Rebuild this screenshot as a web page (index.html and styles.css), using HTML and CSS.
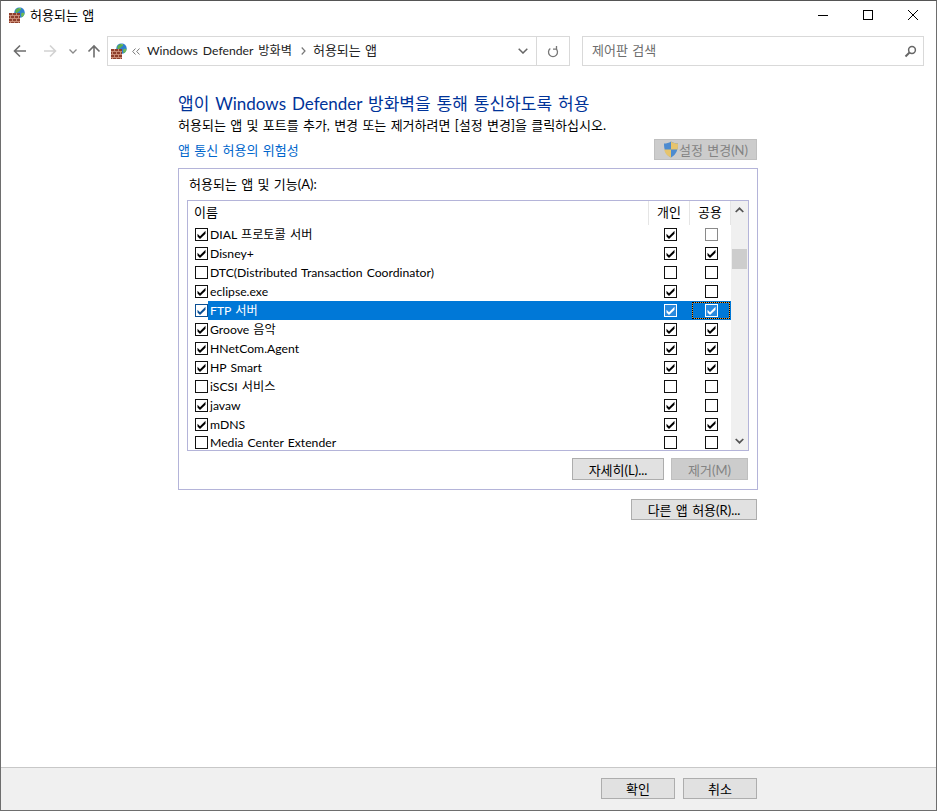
FILE: index.html
```html
<!DOCTYPE html>
<html lang="ko">
<head>
<meta charset="utf-8">
<title>허용되는 앱</title>
<link rel="stylesheet" href="styles.css">
</head>
<body>
<svg class="defs" width="0" height="0">
  <defs>
    <symbol id="fw" viewBox="0 0 16 16">
      <circle cx="10.500" cy="5.500" r="5.200" fill="#2f7fd0"/>
      <path d="M7 2.500c1.500-1.600 3.600-2 5-1.200.8 1-.3 2-1.500 2.400-.6 1.600-1.800 1-2.300 2.300-.9.400-1.800-.2-1.900-1.200 0-.9.200-1.600.7-2.300z" fill="#5fb04a"/>
      <path d="M12.500 6c1.200-.4 2.400-.4 3 .2-.2 2-1.300 3.500-2.700 4-.9-1-.9-2.800-.3-4.200z" fill="#6dbb55"/>
      <path d="M9 .6c1-.3 2.500-.2 3.200.4-.8.500-2.200.500-3.200-.4z" fill="#d7ecfa"/>
      <rect x="0" y="6" width="11" height="10" fill="#8e3f2c"/>
      <path d="M0 8.500h11M0 11.500h11M0 14.500h11M3.500 6v2.500M7.500 6v2.500M1.500 8.500v3M5.500 8.500v3M9.500 8.500v3M3.500 11.500v3M7.500 11.500v3M1.500 14.500V16M5.500 14.500V16M9.500 14.500V16" stroke="#c98a74" stroke-width="1" fill="none"/>
    </symbol>
    <symbol id="on" viewBox="0 0 13 13">
      <rect x=".5" y=".5" width="12" height="12" fill="#fff" stroke="#111"/>
      <path d="M2.500 5.800l2.500 2.400 5.500-5.400v3l-5.500 5.300-2.500-2.500z" fill="#000"/>
    </symbol>
    <symbol id="off" viewBox="0 0 13 13">
      <rect x=".5" y=".5" width="12" height="12" fill="#fff" stroke="#111"/>
    </symbol>
    <symbol id="dim" viewBox="0 0 13 13">
      <rect x=".5" y=".5" width="12" height="12" fill="#fff" stroke="#8a8a8a"/>
    </symbol>
    <symbol id="sel" viewBox="0 0 13 13">
      <rect x=".5" y=".5" width="12" height="12" fill="#fff" stroke="#0a4f94"/>
      <path d="M2.500 5.800l2.500 2.400 5.500-5.400v3l-5.500 5.300-2.500-2.500z" fill="#0a4f94"/>
    </symbol>
    <symbol id="selw" viewBox="0 0 13 13">
      <rect x=".5" y=".5" width="12" height="12" fill="#2a8ade" stroke="#fff"/>
      <path d="M2.500 5.800l2.500 2.400 5.500-5.400v3l-5.500 5.300-2.500-2.500z" fill="#fff"/>
    </symbol>
  </defs>
</svg>

<div class="window">
  <header class="titlebar">
    <div class="title-left">
      <svg class="icon16"><use href="#fw"/></svg>
      <span>허용되는 앱</span>
    </div>
    <div class="caption">
      <span class="cap"><svg width="10" height="10" viewBox="0 0 10 10"><path d="M0 5.500h10" stroke="#000"/></svg></span>
      <span class="cap"><svg width="10" height="10" viewBox="0 0 10 10"><rect x=".5" y=".5" width="9" height="9" fill="none" stroke="#000"/></svg></span>
      <span class="cap"><svg width="10" height="10" viewBox="0 0 10 10"><path d="M0 0l10 10M10 0L0 10" stroke="#000"/></svg></span>
    </div>
  </header>

  <nav class="navbar">
    <div class="nav-btns">
      <svg class="nav-arrow" width="14" height="14" viewBox="0 0 14 14"><path d="M13 7H2M7 1.500L1.500 7 7 12.500" fill="none" stroke="#6d6d6d" stroke-width="1.600"/></svg>
      <svg class="nav-arrow fwd" width="14" height="14" viewBox="0 0 14 14"><path d="M1 7h11M7 1.500L12.500 7 7 12.500" fill="none" stroke="#d2d2d2" stroke-width="1.600"/></svg>
      <svg class="nav-drop" width="8" height="5" viewBox="0 0 8 5"><path d="M.5.500L4 4 7.500.500" fill="none" stroke="#8a8a8a" stroke-width="1.300"/></svg>
      <svg class="nav-arrow up" width="14" height="14" viewBox="0 0 14 14"><path d="M7 13.500V2M1.500 7.500L7 2l5.500 5.500" fill="none" stroke="#6d6d6d" stroke-width="1.600"/></svg>
    </div>
    <div class="address">
      <svg class="icon16"><use href="#fw"/></svg>
      <svg class="chev-l" width="8" height="7" viewBox="0 0 8 7"><path d="M3.500.500L.7 3.500l2.800 3M7.500.500L4.700 3.500l2.800 3" fill="none" stroke="#777"/></svg>
      <span class="crumb narrow">Windows Defender 방화벽</span>
      <svg class="chev-r" width="5" height="8" viewBox="0 0 5 8"><path d="M.7.500L4 4 .7 7.500" fill="none" stroke="#777" stroke-width="1.200"/></svg>
      <span class="crumb">허용되는 앱</span>
      <span class="addr-fill"></span>
      <span class="addr-drop"><svg width="10" height="6" viewBox="0 0 10 6"><path d="M.7.700L5 5 9.300.700" fill="none" stroke="#666" stroke-width="1.500"/></svg></span>
      <span class="addr-refresh"><svg width="12" height="13" viewBox="0 0 12 13"><path d="M3.300 3.500a4.500 4.500 0 1 0 5.400 0M9.500 1v3.200H6" fill="none" stroke="#777" stroke-width="1.300"/></svg></span>
    </div>
    <div class="search">
      <span class="search-text">제어판 검색</span>
      <svg width="13" height="13" viewBox="0 0 13 13"><circle cx="8" cy="5" r="3.400" fill="none" stroke="#666" stroke-width="1.500"/><path d="M5.500 7.500L1.500 11.500" stroke="#666" stroke-width="2"/></svg>
    </div>
  </nav>

  <main class="content">
    <div class="panel">
      <h1 class="heading">앱이 Windows Defender 방화벽을 통해 통신하도록 허용</h1>
      <p class="sub">허용되는 앱 및 포트를 추가, 변경 또는 제거하려면 [설정 변경]을 클릭하십시오.</p>
      <div class="link-row">
        <a class="risk">앱 통신 허용의 위험성</a>
        <button class="btn disabled settings">
          <svg width="16" height="17" viewBox="0 0 16 17"><path d="M8 .5c2 1.500 4.500 2 7 2 0 6-1.500 11-7 14-5.500-3-7-8-7-14 2.500 0 5-.5 7-2z" fill="#4d8bd0"/><path d="M8 .5c2 1.500 4.500 2 7 2 0 2 0 4-.3 6H8z" fill="#e6c46d"/><path d="M8 8.500H1.300c.6 3.500 2.300 6.200 6.700 8z" fill="#e6c46d"/></svg>
          <span>설정 변경(N)</span>
        </button>
      </div>

      <section class="group">
        <div class="group-label">허용되는 앱 및 기능(A):</div>
        <div class="list">
          <div class="list-main">
            <div class="list-head">
              <span class="col-name">이름</span>
              <span class="col-chk">개인</span>
              <span class="col-chk">공용</span>
            </div>
            <div class="rows">
              <div class="row"><svg class="cb"><use href="#on"/></svg><span class="name">DIAL 프로토콜 서버</span><span class="cell"><svg class="cb"><use href="#on"/></svg></span><span class="cell"><svg class="cb"><use href="#dim"/></svg></span></div>
              <div class="row"><svg class="cb"><use href="#on"/></svg><span class="name">Disney+</span><span class="cell"><svg class="cb"><use href="#on"/></svg></span><span class="cell"><svg class="cb"><use href="#on"/></svg></span></div>
              <div class="row"><svg class="cb"><use href="#off"/></svg><span class="name">DTC(Distributed Transaction Coordinator)</span><span class="cell"><svg class="cb"><use href="#off"/></svg></span><span class="cell"><svg class="cb"><use href="#off"/></svg></span></div>
              <div class="row"><svg class="cb"><use href="#on"/></svg><span class="name">eclipse.exe</span><span class="cell"><svg class="cb"><use href="#on"/></svg></span><span class="cell"><svg class="cb"><use href="#off"/></svg></span></div>
              <div class="row selected"><svg class="cb"><use href="#sel"/></svg><span class="name">FTP 서버</span><span class="cell"><svg class="cb"><use href="#selw"/></svg></span><span class="cell"><span class="focus"><svg class="cb"><use href="#selw"/></svg></span></span></div>
              <div class="row"><svg class="cb"><use href="#on"/></svg><span class="name">Groove 음악</span><span class="cell"><svg class="cb"><use href="#on"/></svg></span><span class="cell"><svg class="cb"><use href="#on"/></svg></span></div>
              <div class="row"><svg class="cb"><use href="#on"/></svg><span class="name">HNetCom.Agent</span><span class="cell"><svg class="cb"><use href="#on"/></svg></span><span class="cell"><svg class="cb"><use href="#on"/></svg></span></div>
              <div class="row"><svg class="cb"><use href="#on"/></svg><span class="name">HP Smart</span><span class="cell"><svg class="cb"><use href="#on"/></svg></span><span class="cell"><svg class="cb"><use href="#on"/></svg></span></div>
              <div class="row"><svg class="cb"><use href="#off"/></svg><span class="name">iSCSI 서비스</span><span class="cell"><svg class="cb"><use href="#off"/></svg></span><span class="cell"><svg class="cb"><use href="#off"/></svg></span></div>
              <div class="row"><svg class="cb"><use href="#on"/></svg><span class="name">javaw</span><span class="cell"><svg class="cb"><use href="#on"/></svg></span><span class="cell"><svg class="cb"><use href="#off"/></svg></span></div>
              <div class="row"><svg class="cb"><use href="#on"/></svg><span class="name">mDNS</span><span class="cell"><svg class="cb"><use href="#on"/></svg></span><span class="cell"><svg class="cb"><use href="#on"/></svg></span></div>
              <div class="row last"><svg class="cb"><use href="#off"/></svg><span class="name">Media Center Extender</span><span class="cell"><svg class="cb"><use href="#off"/></svg></span><span class="cell"><svg class="cb"><use href="#off"/></svg></span></div>
            </div>
          </div>
          <div class="scrollbar">
            <svg width="9" height="6" viewBox="0 0 9 6"><path d="M.7 5L4.500 1.300 8.300 5" fill="none" stroke="#555" stroke-width="1.700"/></svg>
            <div class="track"><div class="thumb"></div></div>
            <svg width="9" height="6" viewBox="0 0 9 6"><path d="M.7 1L4.500 4.700 8.300 1" fill="none" stroke="#555" stroke-width="1.700"/></svg>
          </div>
        </div>
        <div class="group-actions">
          <button class="btn details">자세히(L)...</button>
          <button class="btn disabled remove">제거(M)</button>
        </div>
      </section>

      <div class="allow-row">
        <button class="btn allow">다른 앱 허용(R)...</button>
      </div>
    </div>
  </main>

  <footer class="footer">
    <button class="btn ok">확인</button>
    <button class="btn cancel">취소</button>
  </footer>
</div>
</body>
</html>
```
FILE: styles.css
```css
* { box-sizing: border-box; }
html, body { margin: 0; padding: 0; height: 100%; }
body {
  font-family: Lato, "Noto Sans CJK KR", sans-serif;
  font-size: 13px;
  word-spacing: 1px;
  color: #000;
  background: #fff;
  overflow: hidden;
}
.defs { position: absolute; }
.window {
  width: 937px;
  height: 811px;
  display: flex;
  flex-direction: column;
  border: 1px solid #6e6e6e;
  border-top-color: #555;
  background: #fff;
}
.icon16 { width: 16px; height: 16px; flex: none; }

.titlebar {
  height: 30px;
  flex: none;
  display: flex;
  justify-content: space-between;
  align-items: flex-start;
}
.title-left {
  display: flex;
  align-items: center;
  gap: 5px;
  padding: 6px 0 0 8px;
  line-height: 16px;
}
.caption { display: flex; padding-right: 1px; }
.cap {
  width: 45px;
  height: 28px;
  display: flex;
  align-items: center;
  justify-content: center;
}
.cap svg { display: block; }

.navbar {
  height: 30px;
  flex: none;
  margin-top: 5px;
  display: flex;
  align-items: stretch;
}
.nav-btns {
  width: 106px;
  display: flex;
  align-items: center;
  padding-left: 12px;
  flex: none;
}
.nav-arrow.fwd { margin-left: 16px; }
.nav-drop { margin-left: 12px; }
.nav-arrow.up { margin-left: 10px; }
.address {
  width: 463px;
  flex: none;
  border: 1px solid #d9d9d9;
  display: flex;
  align-items: center;
  padding-left: 3px;
}
.chev-l { margin-left: 5px; flex: none; }
.crumb { margin: 0 0 3px 7px; color: #222; white-space: nowrap; }
.crumb.narrow { font-size: 12.2px; word-spacing: 2px; }
.chev-r { margin-left: 9px; flex: none; }
.addr-fill { flex: 1; }
.addr-drop {
  width: 26px;
  display: flex;
  justify-content: center;
}
.addr-refresh {
  width: 33px;
  height: 100%;
  border-left: 1px solid #d9d9d9;
  display: flex;
  align-items: center;
  justify-content: center;
}
.search {
  width: 342px;
  flex: none;
  margin-left: 12px;
  border: 1px solid #d9d9d9;
  display: flex;
  align-items: center;
  justify-content: space-between;
  padding: 0 6px 0 9px;
  color: #6d6d6d;
}
.search-text { margin-bottom: 3px; }

.content {
  flex: 1;
  min-height: 0;
  padding: 27px 0 0 177px;
}
.panel { width: 580px; }
.heading {
  margin: 0;
  font-size: 17px;
  font-weight: 400;
  word-spacing: 1.6px;
  line-height: 22px;
  color: #003399;
  white-space: nowrap;
}
.sub {
  margin: 1px 0 0;
  line-height: 18px;
  white-space: nowrap;
}
.link-row {
  margin-top: 5px;
  height: 24px;
  display: flex;
  justify-content: space-between;
  align-items: flex-start;
  padding-right: 1px;
}
.risk { color: #0066cc; line-height: 22px; }

.btn {
  font: inherit;
  word-spacing: inherit;
  color: #000;
  background: #e1e1e1;
  border: 1px solid #adadad;
  padding: 0;
  height: 22px;
  display: inline-flex;
  align-items: center;
  justify-content: center;
  white-space: nowrap;
}
.btn.disabled {
  background: #cccccc;
  border-color: #bfbfbf;
  color: #838383;
}
.settings { width: 103px; height: 21px; gap: 0; }

.group {
  height: 322px;
  margin-top: 5px;
  border: 1px solid #b4b4d9;
  padding: 7px 8px 0;
  display: flex;
  flex-direction: column;
}
.group-label { line-height: 17px; padding-left: 2px; }
.list {
  margin-top: 7px;
  height: 251px;
  flex: none;
  border: 1px solid #b4b4d9;
  display: flex;
  overflow: hidden;
}
.list-main {
  width: 543px;
  flex: none;
  display: flex;
  flex-direction: column;
}
.list-head {
  height: 24px;
  flex: none;
  display: flex;
  align-items: center;
}
.col-name { flex: 1; padding: 0 0 3px 6px; }
.col-chk {
  width: 41px;
  height: 100%;
  flex: none;
  border-left: 1px solid #e5e5e5;
  display: flex;
  align-items: center;
  justify-content: center;
  padding-bottom: 3px;
}
.col-chk:last-child { width: 42px; border-right: 1px solid #e5e5e5; }
.rows { flex: 1; min-height: 0; overflow: hidden; }
.row {
  height: 19px;
  display: flex;
  align-items: center;
  padding-left: 7px;
}
.row.last { height: 17px; }
.cb { width: 13px; height: 13px; flex: none; display: block; }
.name {
  flex: 1;
  height: 100%;
  padding-left: 2px;
  font-size: 12.2px;
  line-height: 19px;
  white-space: nowrap;
}
.row.last .name { padding-top: 1px; line-height: 16px; }
.cell {
  width: 41px;
  height: 100%;
  flex: none;
  display: flex;
  align-items: center;
  justify-content: center;
  padding-left: 1px;
}
.row.selected .name,
.row.selected .cell {
  background: #0078d7;
  color: #fff;
}
.focus {
  width: 38px;
  height: 17px;
  display: flex;
  align-items: center;
  justify-content: center;
  border: 1px dotted #000;
  background:
    linear-gradient(#0078d7, #0078d7) padding-box,
    linear-gradient(#ee9a2e, #ee9a2e) border-box;
}
.scrollbar {
  flex: 1;
  background: #f0f0f0;
  display: flex;
  flex-direction: column;
  align-items: center;
  padding-top: 6px;
  padding-bottom: 6px;
}
.track { flex: 1; width: 100%; padding: 36px 1px 0; }
.thumb { height: 20px; background: #cdcdcd; }
.group-actions {
  margin-top: 7px;
  display: flex;
  justify-content: flex-end;
  gap: 7px;
  padding-right: 1px;
}
.details { width: 92px; }
.remove { width: 77px; }

.allow-row {
  margin-top: 9px;
  display: flex;
  justify-content: flex-end;
  padding-right: 1px;
}
.allow { width: 126px; height: 21px; }

.footer {
  height: 43px;
  flex: none;
  background: #f0f0f0;
  border-top: 1px solid #c8c8c8;
  display: flex;
  justify-content: flex-end;
  align-items: flex-start;
  gap: 8px;
  padding: 10px 179px 0 0;
}
.ok, .cancel { width: 74px; height: 21px; }
```
